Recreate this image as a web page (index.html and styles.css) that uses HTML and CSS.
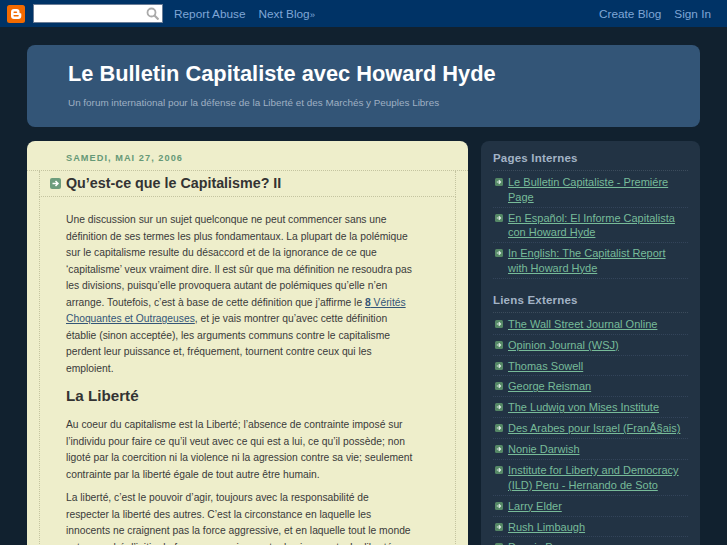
FILE: index.html
```html
<!DOCTYPE html>
<html lang="fr">
<head>
<meta charset="utf-8">
<title>Le Bulletin Capitaliste avec Howard Hyde</title>
<link rel="stylesheet" href="styles.css">
</head>
<body>
<nav class="navbar">
  <svg class="logo" viewBox="0 0 18 18" width="18" height="18"><rect width="18" height="18" rx="2.5" fill="#f26a00"/><path d="M7 4h2.8A2.7 2.7 0 0 1 12.5 6.7v.6c0 .6.4 1 1 1h.2c.4 0 .6.3.6.7v2.1a3 3 0 0 1-3 3H7a3 3 0 0 1-3-3V7a3 3 0 0 1 3-3z" fill="#fff"/><rect x="6.4" y="6.4" width="3.8" height="1.6" rx=".8" fill="#f26a00"/><rect x="6.4" y="10" width="5.4" height="1.6" rx=".8" fill="#f26a00"/></svg>
  <div class="search"><svg viewBox="0 0 13 13" width="13" height="13"><circle cx="5.5" cy="5.5" r="4" fill="none" stroke="#aaa" stroke-width="1.8"/><path d="M8.5 8.5l4 4" stroke="#aaa" stroke-width="2.2"/></svg></div>
  <a class="nav-link first" href="#">Report Abuse</a>
  <a class="nav-link" href="#">Next Blog<small>»</small></a>
  <a class="nav-link push" href="#">Create Blog</a>
  <a class="nav-link" href="#">Sign In</a>
</nav>
<div class="page">
  <header class="masthead">
    <h1>Le Bulletin Capitaliste avec Howard Hyde</h1>
    <p>Un forum international pour la défense de la Liberté et des Marchés y Peuples Libres</p>
  </header>
  <div class="columns">
    <main class="main">
      <h2 class="date">Samedi, Mai 27, 2006</h2>
      <div class="post">
        <h3 class="post-title"><svg class="arrow" viewBox="0 0 11 11" width="11" height="11"><rect width="11" height="11" rx="2" fill="#6d9d7d"/><path d="M2.5 5.5h5M5.5 3l2.5 2.5L5.5 8" fill="none" stroke="#fff" stroke-width="1.5"/></svg>Qu’est-ce que le Capitalisme? II</h3>
        <div class="post-body">
          <p>Une discussion sur un sujet quelconque ne peut commencer sans une<br>définition de ses termes les plus fondamentaux. La plupart de la polémique<br>sur le capitalisme resulte du désaccord et de la ignorance de ce que<br>‘capitalisme’ veux vraiment dire. Il est sûr que ma définition ne resoudra pas<br>les divisions, puisqu’elle provoquera autant de polémiques qu’elle n’en<br>arrange. Toutefois, c’est à base de cette définition que j’affirme le <a href="#"><b>8</b> Vérités<br>Choquantes et Outrageuses</a>, et je vais montrer qu’avec cette définition<br>établie (sinon acceptée), les arguments communs contre le capitalisme<br>perdent leur puissance et, fréquement, tournent contre ceux qui les<br>emploient.</p>
          <h4>La Liberté</h4>
          <p>Au coeur du capitalisme est la Liberté; l’absence de contrainte imposé sur<br>l’individu pour faire ce qu’il veut avec ce qui est a lui, ce qu’il possède; non<br>ligoté par la coercition ni la violence ni la agression contre sa vie; seulement<br>contrainte par la liberté égale de tout autre être humain.</p>
          <p>La liberté, c’est le pouvoir d’agir, toujours avec la responsabilité de<br>respecter la liberté des autres. C’est la circonstance en laquelle les<br>innocents ne craignent pas la force aggressive, et en laquelle tout le monde<br>est empeché d’initier la force aggressive contre les innocents. La liberté</p>
        </div>
      </div>
    </main>
    <aside class="sidebar">
      <section class="widget">
        <h2>Pages Internes</h2>
        <ul>
          <li><svg class="bullet" viewBox="0 0 8 8" width="8" height="8"><rect width="8" height="8" rx="1.5" fill="#558866"/><path d="M1.8 4h3.6M3.8 2.2L5.6 4 3.8 5.8" fill="none" stroke="#dfeee6" stroke-width="1.1"/></svg><a href="#">Le Bulletin Capitaliste - Premiére Page</a></li>
          <li><svg class="bullet" viewBox="0 0 8 8" width="8" height="8"><rect width="8" height="8" rx="1.5" fill="#558866"/><path d="M1.8 4h3.6M3.8 2.2L5.6 4 3.8 5.8" fill="none" stroke="#dfeee6" stroke-width="1.1"/></svg><a href="#">En Español: El Informe Capitalista con Howard Hyde</a></li>
          <li><svg class="bullet" viewBox="0 0 8 8" width="8" height="8"><rect width="8" height="8" rx="1.5" fill="#558866"/><path d="M1.8 4h3.6M3.8 2.2L5.6 4 3.8 5.8" fill="none" stroke="#dfeee6" stroke-width="1.1"/></svg><a href="#">In English: The Capitalist Report with Howard Hyde</a></li>
        </ul>
      </section>
      <section class="widget">
        <h2>Liens Externes</h2>
        <ul>
          <li><svg class="bullet" viewBox="0 0 8 8" width="8" height="8"><rect width="8" height="8" rx="1.5" fill="#558866"/><path d="M1.8 4h3.6M3.8 2.2L5.6 4 3.8 5.8" fill="none" stroke="#dfeee6" stroke-width="1.1"/></svg><a href="#">The Wall Street Journal Online</a></li>
          <li><svg class="bullet" viewBox="0 0 8 8" width="8" height="8"><rect width="8" height="8" rx="1.5" fill="#558866"/><path d="M1.8 4h3.6M3.8 2.2L5.6 4 3.8 5.8" fill="none" stroke="#dfeee6" stroke-width="1.1"/></svg><a href="#">Opinion Journal (WSJ)</a></li>
          <li><svg class="bullet" viewBox="0 0 8 8" width="8" height="8"><rect width="8" height="8" rx="1.5" fill="#558866"/><path d="M1.8 4h3.6M3.8 2.2L5.6 4 3.8 5.8" fill="none" stroke="#dfeee6" stroke-width="1.1"/></svg><a href="#">Thomas Sowell</a></li>
          <li><svg class="bullet" viewBox="0 0 8 8" width="8" height="8"><rect width="8" height="8" rx="1.5" fill="#558866"/><path d="M1.8 4h3.6M3.8 2.2L5.6 4 3.8 5.8" fill="none" stroke="#dfeee6" stroke-width="1.1"/></svg><a href="#">George Reisman</a></li>
          <li><svg class="bullet" viewBox="0 0 8 8" width="8" height="8"><rect width="8" height="8" rx="1.5" fill="#558866"/><path d="M1.8 4h3.6M3.8 2.2L5.6 4 3.8 5.8" fill="none" stroke="#dfeee6" stroke-width="1.1"/></svg><a href="#">The Ludwig von Mises Institute</a></li>
          <li><svg class="bullet" viewBox="0 0 8 8" width="8" height="8"><rect width="8" height="8" rx="1.5" fill="#558866"/><path d="M1.8 4h3.6M3.8 2.2L5.6 4 3.8 5.8" fill="none" stroke="#dfeee6" stroke-width="1.1"/></svg><a href="#">Des Arabes pour Israel (FranÃ§ais)</a></li>
          <li><svg class="bullet" viewBox="0 0 8 8" width="8" height="8"><rect width="8" height="8" rx="1.5" fill="#558866"/><path d="M1.8 4h3.6M3.8 2.2L5.6 4 3.8 5.8" fill="none" stroke="#dfeee6" stroke-width="1.1"/></svg><a href="#">Nonie Darwish</a></li>
          <li><svg class="bullet" viewBox="0 0 8 8" width="8" height="8"><rect width="8" height="8" rx="1.5" fill="#558866"/><path d="M1.8 4h3.6M3.8 2.2L5.6 4 3.8 5.8" fill="none" stroke="#dfeee6" stroke-width="1.1"/></svg><a href="#">Institute for Liberty and Democracy (ILD) Peru - Hernando de Soto</a></li>
          <li><svg class="bullet" viewBox="0 0 8 8" width="8" height="8"><rect width="8" height="8" rx="1.5" fill="#558866"/><path d="M1.8 4h3.6M3.8 2.2L5.6 4 3.8 5.8" fill="none" stroke="#dfeee6" stroke-width="1.1"/></svg><a href="#">Larry Elder</a></li>
          <li><svg class="bullet" viewBox="0 0 8 8" width="8" height="8"><rect width="8" height="8" rx="1.5" fill="#558866"/><path d="M1.8 4h3.6M3.8 2.2L5.6 4 3.8 5.8" fill="none" stroke="#dfeee6" stroke-width="1.1"/></svg><a href="#">Rush Limbaugh</a></li>
          <li><svg class="bullet" viewBox="0 0 8 8" width="8" height="8"><rect width="8" height="8" rx="1.5" fill="#558866"/><path d="M1.8 4h3.6M3.8 2.2L5.6 4 3.8 5.8" fill="none" stroke="#dfeee6" stroke-width="1.1"/></svg><a href="#">Dennis Prager</a></li>
        </ul>
      </section>
    </aside>
  </div>
</div>
</body>
</html>
```
FILE: styles.css
```css
html, body { margin: 0; padding: 0; height: 545px; overflow: hidden; }
body { background: #11212f; font-family: "Liberation Sans", Arial, sans-serif; }
a { color: inherit; }
.navbar { display: flex; align-items: center; height: 27px; background: #003366; padding-left: 7px; padding-right: 16px; box-sizing: border-box; }
.logo { flex: none; }
.search { display: flex; justify-content: flex-end; align-items: center; box-sizing: border-box; width: 130px; height: 19px; margin-left: 8px; background: #fff; border: 1px solid #6b7d96; padding-right: 3px; }
.nav-link { color: #7fa6d6; font-size: 11.8px; text-decoration: none; margin-left: 13px; }
.nav-link small { font-size: 9.5px; }
.nav-link.first { margin-left: 11px; }
.nav-link.push { margin-left: auto; }
.page { padding: 18px 27px 0; }
.masthead { background: #335577; border-radius: 8px; height: 82px; box-sizing: border-box; padding: 16px 41px 0; }
.masthead h1 { margin: 0; color: #fff; font-size: 21.8px; line-height: 26px; font-weight: bold; }
.masthead p { margin: 9px 0 0; color: #9fb0c3; font-size: 9.9px; line-height: 13px; }
.columns { display: flex; gap: 13px; margin-top: 14px; align-items: flex-start; }
.main { width: 441px; height: 500px; flex: none; background: #eeeecb; border-radius: 8px 8px 0 0; padding-top: 11px; box-sizing: border-box; }
.date { margin: 0 0 6px 39px; color: #669977; font-size: 9.2px; line-height: 12px; letter-spacing: 1.05px; text-transform: uppercase; font-weight: bold; }
.post { border-top: 1px dotted #c4c4a0; height: 480px; }
.post-title { display: flex; align-items: center; gap: 5px; margin: 0 12px; height: 26px; padding: 0 0 1px 10px; color: #333; font-size: 14.3px; font-weight: bold; border: 1px dotted #c4c4a0; border-width: 0 1px 1px; box-sizing: border-box; }
.arrow { flex: none; }
.post-body { margin: 0 12px; height: 460px; border: 1px dotted #c4c4a0; border-width: 0 1px; padding: 15px 0 0 26px; color: #3a3a3a; font-size: 10.3px; line-height: 16.5px; white-space: nowrap; }
.post-body p { margin: 0 0 7px; }
.post-body p:first-child { margin-bottom: 10px; }
.post-body a { color: #335577; }
.post-body h4 { margin: 0 0 12px; font-size: 15.2px; line-height: 18px; color: #333; }
.sidebar { width: 219px; height: 500px; flex: none; background: #223344; border-radius: 8px 8px 0 0; padding: 10px 12px 0; box-sizing: border-box; color: #77bb99; }
.widget { margin-bottom: 14px; }
.widget h2 { margin: 0; color: #a3b3c6; font-size: 11.5px; line-height: 14px; font-weight: bold; letter-spacing: .2px; padding-bottom: 5px; border-bottom: 1px dotted #3c4c5c; }
.widget ul { list-style: none; margin: 0; padding: 1px 0 0; }
.widget li { display: flex; align-items: flex-start; gap: 5px; padding: 3px 0 2.2px 2px; font-size: 11px; line-height: 14.7px; border-bottom: 1px dotted #33445a; }
.bullet { flex: none; margin-top: 3px; }
```
